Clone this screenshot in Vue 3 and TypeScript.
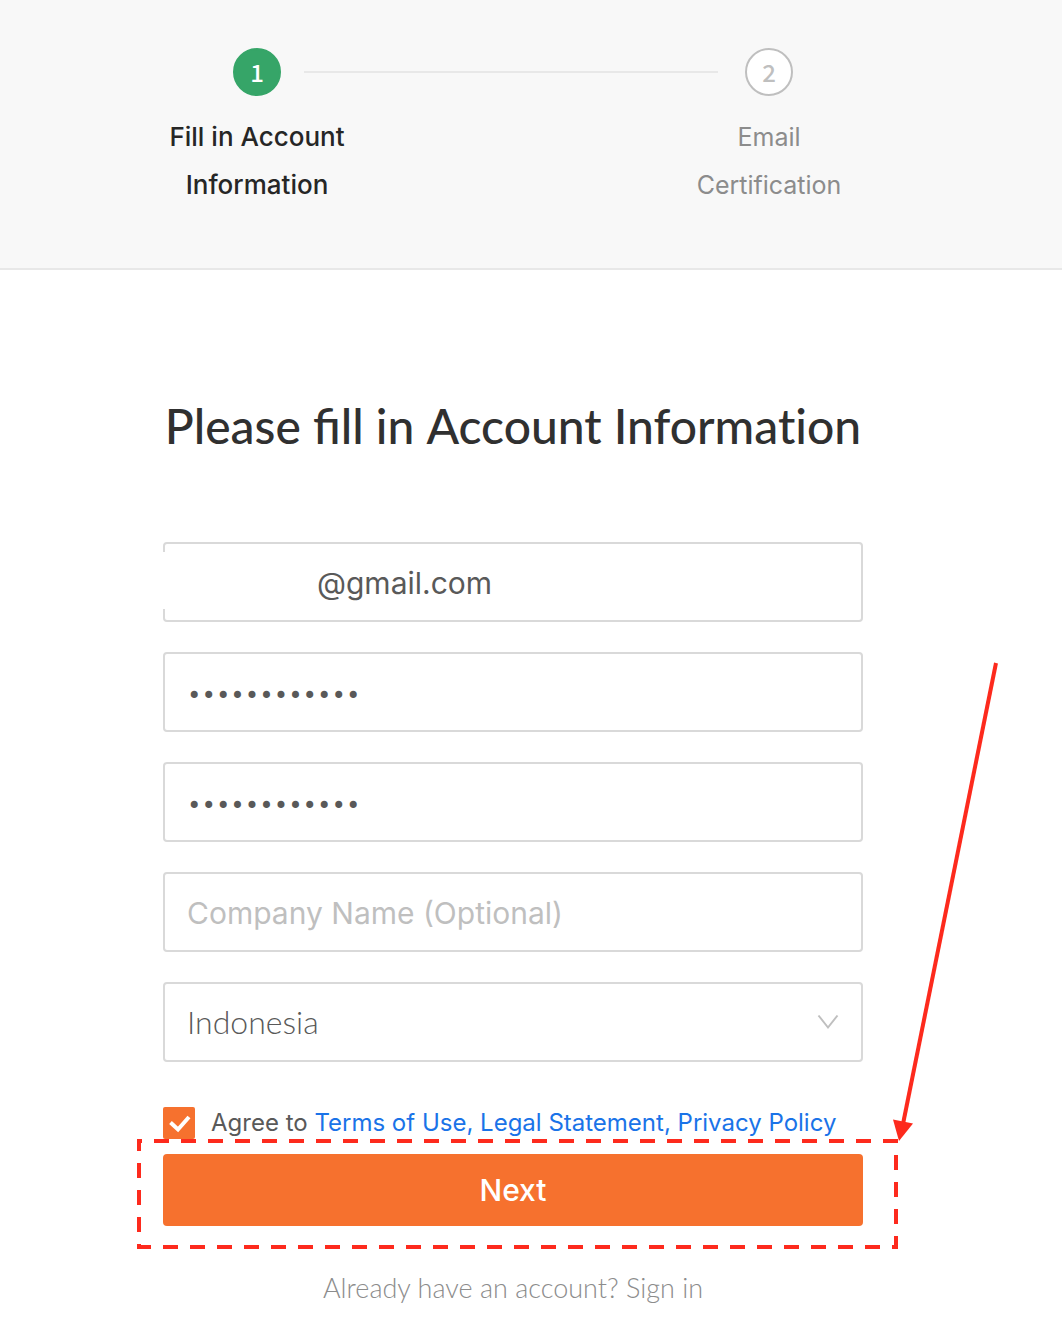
<script setup lang="ts">
import { ref } from 'vue'

const email = ref('@gmail.com')
const password = ref('abcdefghijkl')
const confirmation = ref('abcdefghijkl')
const company = ref('')
const country = ref('Indonesia')
const agreed = ref(true)

const countries: string[] = ['Indonesia', 'Malaysia', 'Singapore', 'Thailand']
</script>

<template>
  <div class="page">
    <header class="header">
      <ol class="steps">
        <li class="step active" aria-current="step">
          <span class="badge">1</span>
          <span class="step-title">Fill in Account Information</span>
        </li>
        <li class="rail" aria-hidden="true"></li>
        <li class="step">
          <span class="badge">2</span>
          <span class="step-title">Email Certification</span>
        </li>
      </ol>
    </header>

    <main class="main">
      <form class="form" @submit.prevent>
        <h1 class="title">Please fill in <span>Account Information</span></h1>

        <div class="fields">
          <div class="field masked">
            <input v-model="email" class="control email" type="text" aria-label="Email" />
          </div>
          <div class="field">
            <input v-model="password" class="control secret" type="password" aria-label="Password" />
          </div>
          <div class="field">
            <input v-model="confirmation" class="control secret" type="password" aria-label="Confirm password" />
          </div>
          <div class="field">
            <input v-model="company" class="control" type="text" placeholder="Company Name (Optional)" aria-label="Company Name" />
          </div>
          <div class="field">
            <select v-model="country" class="control country" aria-label="Country">
              <option v-for="name in countries" :key="name" :value="name">{{ name }}</option>
            </select>
            <svg class="chevron" viewBox="0 0 22 16" aria-hidden="true">
              <path d="M1.5 1.5 11 13.5 20.5 1.5" fill="none" stroke="#bfbfbf" stroke-width="2" />
            </svg>
          </div>
        </div>

        <div class="agreement">
          <span class="tick">
            <input id="agree" v-model="agreed" type="checkbox" />
            <svg v-if="agreed" viewBox="0 0 32 32" aria-hidden="true">
              <path d="M7.5 15.5 15 22.500 26 10" fill="none" stroke="#fff" stroke-width="4" />
            </svg>
          </span>
          <span class="agreement-text">
            <label for="agree">Agree to</label>&#32;<a href="#terms">Terms of Use, Legal Statement, Privacy Policy</a>
          </span>
        </div>

        <div class="submit">
          <button type="submit">Next</button>
          <svg class="outline" aria-hidden="true">
            <rect x="2" y="2" />
          </svg>
          <svg class="arrow" viewBox="0 0 108 480" aria-hidden="true">
            <path d="M103 1 10 462" fill="none" stroke="#fd2a1d" stroke-width="4" />
            <path d="M0 457.500 20 461.500 6 479z" fill="#fd2a1d" />
          </svg>
        </div>

        <p class="signin">Already have an account? <a href="#signin">Sign in</a></p>
      </form>
    </main>
  </div>
</template>

<style>
body {
  margin: 0;
  background: #fff;
}
</style>

<style scoped>
.page {
  font-family: Inter, "Liberation Sans", sans-serif;
  color: #595959;
  overflow-x: hidden;
}

.header,
.main {
  display: flex;
  justify-content: center;
  padding-right: 36px;
}

.header {
  padding-top: 48px;
  padding-bottom: 59px;
  background: #f8f8f8;
  border-bottom: 2px solid #e8e8e8;
}

.steps {
  display: flex;
  width: 100%;
  max-width: 720px;
  margin: 0;
  padding: 0;
  list-style: none;
}

.step {
  display: flex;
  flex: 0 0 208px;
  flex-direction: column;
  align-items: center;
  gap: 17px;
  color: #8c8c8c;
}

.badge {
  box-sizing: border-box;
  width: 48px;
  height: 48px;
  border: 2px solid #bfbfbf;
  border-radius: 50%;
  background: #fff;
  color: #bfbfbf;
  font: 500 24px/44px "Noto Sans CJK SC", sans-serif;
  text-align: center;
}

.active .badge {
  border-color: #36a568;
  background: #36a568;
  color: #fff;
}

.step-title {
  width: 184px;
  font-size: 25px;
  line-height: 48px;
  text-align: center;
}

.active .step-title {
  color: #262626;
  font-size: 26px;
  font-weight: 500;
}

.rail {
  flex: 1;
  height: 2px;
  margin: 23px -53px 0 -57px;
  background: #e8e8e8;
}

.main {
  padding-top: 128px;
  padding-bottom: 20px;
}

.form {
  width: 100%;
  max-width: 700px;
}

.title {
  margin: 0 0 88px;
  color: #303030;
  font: 500 48px/56px Lato, sans-serif;
  text-align: center;
  white-space: nowrap;
}

.title span {
  font-variant-ligatures: none;
}

.fields {
  display: flex;
  flex-direction: column;
  gap: 30px;
}

.field {
  position: relative;
}

.masked::before {
  content: "";
  position: absolute;
  top: 10px;
  bottom: 13px;
  left: 0;
  width: 2px;
  background: #fff;
}

.control {
  display: block;
  box-sizing: border-box;
  width: 100%;
  height: 80px;
  margin: 0;
  padding: 2px 22px 0;
  border: 2px solid #d9d9d9;
  border-radius: 4px;
  outline: none;
  background: #fff;
  color: #595959;
  font: 400 30px Inter, "Liberation Sans", sans-serif;
}

.control::placeholder {
  color: #bfbfbf;
  opacity: 1;
}

.email {
  padding-left: 152px;
}

.secret {
  padding-top: 8px;
  font: 400 24px "DejaVu Sans Mono", monospace;
}

.country {
  appearance: none;
  padding: 0 22px 2px;
  font: 300 32px Lato, sans-serif;
}

.chevron {
  position: absolute;
  top: 32px;
  right: 24px;
  width: 22px;
  height: 16px;
  pointer-events: none;
}

.agreement {
  display: flex;
  align-items: center;
  gap: 16px;
  margin-top: 45px;
  font-size: 24px;
  line-height: 32px;
  white-space: nowrap;
}

.tick {
  position: relative;
  flex: none;
  width: 32px;
  height: 32px;
}

.tick input {
  appearance: none;
  display: block;
  width: 32px;
  height: 32px;
  margin: 0;
  border-radius: 2px;
  background: #f6712e;
}

.tick svg {
  position: absolute;
  inset: 0;
  pointer-events: none;
}

.agreement a {
  color: #1a73e8;
  text-decoration: none;
}

.submit {
  position: relative;
  margin-top: 15px;
}

.submit button {
  display: block;
  width: 100%;
  height: 72px;
  padding: 0;
  border: 0;
  border-radius: 4px;
  background: #f6712e;
  color: #fff;
  font: 500 30px Inter, "Liberation Sans", sans-serif;
}

.outline {
  position: absolute;
  top: -15px;
  left: -26px;
  width: calc(100% + 61px);
  height: 110px;
  pointer-events: none;
}

.outline rect {
  width: calc(100% - 4px);
  height: calc(100% - 4px);
  fill: none;
  stroke: #fd2a1d;
  stroke-width: 4px;
  stroke-dasharray: 15 12;
  stroke-dashoffset: 12px;
}

.arrow {
  position: absolute;
  bottom: 84px;
  left: calc(100% + 30px);
  width: 108px;
  height: 480px;
  pointer-events: none;
}

.signin {
  margin: 42px 0 0;
  color: #8c8c8c;
  font: 300 27px/40px Lato, sans-serif;
  text-align: center;
}

.signin a {
  color: inherit;
  text-decoration: none;
}
</style>
